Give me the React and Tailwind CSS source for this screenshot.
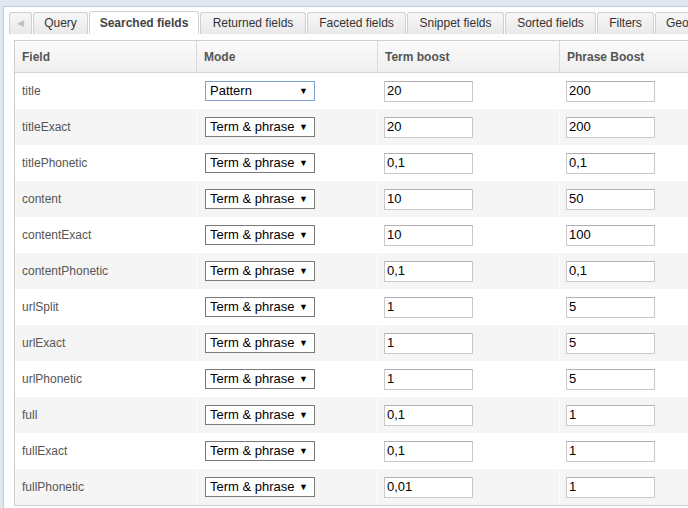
const tabs = [
  { label: 'Query', w: 'w-[55px]' },
  { label: 'Searched fields', w: 'w-[110px]', active: true },
  { label: 'Returned fields', w: 'w-[106px]' },
  { label: 'Faceted fields', w: 'w-[99px]' },
  { label: 'Snippet fields', w: 'w-[97px]' },
  { label: 'Sorted fields', w: 'w-[91px]' },
  { label: 'Filters', w: 'w-[57px]' },
  { label: 'Geo', w: 'w-[60px] justify-start pl-[10px]' },
];

const rows = [
  { field: 'title', mode: 'Pattern', term: '20', phrase: '200', focused: true },
  { field: 'titleExact', mode: 'Term & phrase', term: '20', phrase: '200' },
  { field: 'titlePhonetic', mode: 'Term & phrase', term: '0,1', phrase: '0,1' },
  { field: 'content', mode: 'Term & phrase', term: '10', phrase: '50' },
  { field: 'contentExact', mode: 'Term & phrase', term: '10', phrase: '100' },
  { field: 'contentPhonetic', mode: 'Term & phrase', term: '0,1', phrase: '0,1' },
  { field: 'urlSplit', mode: 'Term & phrase', term: '1', phrase: '5' },
  { field: 'urlExact', mode: 'Term & phrase', term: '1', phrase: '5' },
  { field: 'urlPhonetic', mode: 'Term & phrase', term: '1', phrase: '5' },
  { field: 'full', mode: 'Term & phrase', term: '0,1', phrase: '1' },
  { field: 'fullExact', mode: 'Term & phrase', term: '0,1', phrase: '1' },
  { field: 'fullPhonetic', mode: 'Term & phrase', term: '0,01', phrase: '1' },
];

const ModeSelect = ({ value, focused }) => (
  <div
    className={`flex h-[20px] w-[110px] items-center justify-between border bg-white pl-[4px] pr-[6px] text-[13px] text-black ${
      focused ? 'border-[#7aa0d4]' : 'border-[#7a7a7a]'
    }`}
  >
    <span>{value}</span>
    <span className="text-[9px] leading-none">▼</span>
  </div>
);

const BoostInput = ({ value }) => (
  <div className="flex h-[21px] w-[89px] items-center border border-[#c8c8c8] border-t-[#b0b0b0] bg-white pl-[2px] text-[13px] text-black">
    {value}
  </div>
);

const App = () => {
  return (
    <div
      className="h-[508px] w-[688px] overflow-hidden bg-[#dfe8f0] pl-[3px] pt-[6px]"
      style={{ fontFamily: '"Liberation Sans", Arial, sans-serif' }}
    >
      <div className="h-full border-l border-t border-[#c4cdd6] bg-white pl-[5px] pt-[4px]">
        <div className="flex h-[23px] items-end gap-[1px] whitespace-nowrap">
          <div className="flex h-[22px] w-[23px] shrink-0 items-center justify-center rounded-t-[3px] border border-b-0 border-[#d0d0d0] bg-gradient-to-b from-[#f7f7f7] to-[#e9e9e9]">
            <span className="text-[9px] text-[#c0c0c0]">◀</span>
          </div>
          {tabs.map((tab) => (
            <div
              key={tab.label}
              className={`flex shrink-0 items-center justify-center rounded-t-[3px] border border-b-0 border-[#d0d0d0] pb-[1px] text-[12px] ${tab.w} ${
                tab.active
                  ? 'h-[23px] bg-white font-bold text-[#444]'
                  : 'h-[22px] bg-gradient-to-b from-[#f7f7f7] to-[#e9e9e9] text-[#333]'
              }`}
            >
              {tab.label}
            </div>
          ))}
        </div>

        <div className="ml-[5px] mt-[6px] w-[760px] border-l border-t border-[#cfcfcf]">
          <div className="flex h-[32px] border-b border-[#d4d4d4] bg-gradient-to-b from-[#fbfbfb] to-[#efefef] text-[12px] font-bold text-[#555]">
            <div className="flex w-[181px] items-center pl-[7px]">Field</div>
            <div className="flex w-[181px] items-center border-l border-[#dadada] pl-[7px]">Mode</div>
            <div className="flex w-[182px] items-center border-l border-[#dadada] pl-[7px]">Term boost</div>
            <div className="flex w-[182px] items-center border-l border-[#dadada] pl-[7px]">Phrase Boost</div>
          </div>
          {rows.map((row, i) => (
            <div key={row.field} className={`flex h-[36px] text-[12px] text-[#555] ${i % 2 ? 'bg-[#f5f5f5]' : 'bg-white'}`}>
              <div className="flex w-[181px] items-center pb-[1px] pl-[7px]">{row.field}</div>
              <div className="flex w-[181px] items-center border-l border-white pl-[8px]">
                <ModeSelect value={row.mode} focused={row.focused} />
              </div>
              <div className="flex w-[182px] items-center border-l border-white pl-[6px]">
                <BoostInput value={row.term} />
              </div>
              <div className="flex w-[182px] items-center border-l border-white pl-[6px]">
                <BoostInput value={row.phrase} />
              </div>
            </div>
          ))}
          <div className="border-t border-[#cfcfcf]" />
        </div>
      </div>
    </div>
  );
};

export default App;
